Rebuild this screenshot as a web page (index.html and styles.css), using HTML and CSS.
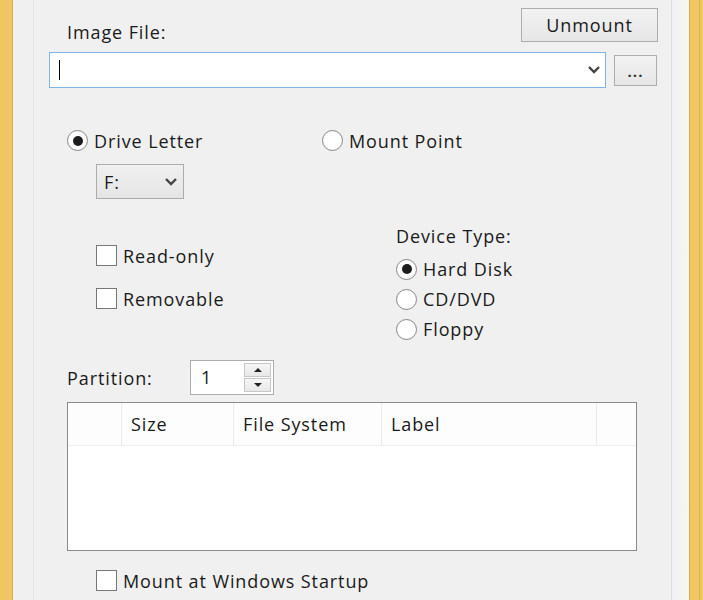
FILE: index.html
```html
<!DOCTYPE html>
<html>
<head>
<meta charset="utf-8">
<link rel="stylesheet" href="styles.css">
</head>
<body>
<div class="window">
  <div class="frame frame-left"></div>
  <div class="client">
    <div class="panel">
      <div class="row-top">
        <div class="label image-label">Image File:</div>
        <button class="btn unmount">Unmount</button>
      </div>
      <div class="row-file">
        <div class="combo">
          <span class="caret"></span>
          <svg class="chev" width="14" height="10" viewBox="0 0 14 10"><path d="M2 2 L7 7 L12 2" fill="none" stroke="#444" stroke-width="2.4"/></svg>
        </div>
        <button class="btn browse">...</button>
      </div>
      <div class="row-radios">
        <label class="opt opt-drive"><span class="radio checked"></span>Drive Letter</label>
        <label class="opt"><span class="radio"></span>Mount Point</label>
      </div>
      <div class="drive-select">
        <span>F:</span>
        <svg class="chev" width="14" height="10" viewBox="0 0 14 10"><path d="M2 2 L7 7 L12 2" fill="none" stroke="#444" stroke-width="2.4"/></svg>
      </div>
      <div class="row-options">
        <div class="checks">
          <label class="opt check-row"><span class="checkbox"></span>Read-only</label>
          <label class="opt check-row"><span class="checkbox"></span>Removable</label>
        </div>
        <div class="device">
          <div class="label device-label">Device Type:</div>
          <label class="opt dev-row"><span class="radio checked"></span>Hard Disk</label>
          <label class="opt dev-row"><span class="radio"></span>CD/DVD</label>
          <label class="opt dev-row"><span class="radio"></span>Floppy</label>
        </div>
      </div>
      <div class="row-partition">
        <div class="label part-label">Partition:</div>
        <div class="spin">
          <span class="spin-value">1</span>
          <div class="spin-btns">
            <div class="spin-btn"><svg width="10" height="6" viewBox="0 0 10 6"><path d="M1 5 L5 1 L9 5 Z" fill="#222"/></svg></div>
            <div class="spin-btn"><svg width="10" height="6" viewBox="0 0 10 6"><path d="M1 1 L5 5 L9 1 Z" fill="#222"/></svg></div>
          </div>
        </div>
      </div>
      <div class="list">
        <div class="list-head">
          <div class="col c0"></div>
          <div class="col c1">Size</div>
          <div class="col c2">File System</div>
          <div class="col c3">Label</div>
          <div class="col c4"></div>
        </div>
      </div>
      <label class="opt startup"><span class="checkbox"></span>Mount at Windows Startup</label>
    </div>
    <div class="gutter-right"></div>
  </div>
  <div class="frame frame-right"></div>
</div>
</body>
</html>
```
FILE: styles.css
```css
* { box-sizing: border-box; }
html, body { margin: 0; padding: 0; }
body {
  width: 703px;
  height: 600px;
  overflow: hidden;
  font-family: "Open Sans", "Noto Sans", sans-serif;
  font-size: 18px;
  letter-spacing: 0.9px;
  color: #1a1a1a;
  background: #f0f0f0;
}
.window {
  display: flex;
  height: 600px;
}
.frame {
  flex: none;
  background: #efc662;
}
.frame-left {
  width: 13px;
  border-right: 1px solid #d6ad4c;
  box-shadow: 1px 0 0 #fbf6e6;
}
.frame-right {
  width: 14px;
  border-left: 1px solid #d6ad4c;
  background: linear-gradient(to right, #efc662 0, #efc662 9px, #d9b251 9px, #d9b251 10px, #efc662 10px);
}
.client {
  flex: 1;
  display: flex;
  background: #f0f0f0;
  padding-left: 20px;
}
.panel {
  width: 639px;
  border-left: 1px solid #e2e2e2;
  border-right: 1px solid #dcdcdc;
  background: #f0f0f0;
  padding: 8px 13px 0 15px;
}
.gutter-right {
  flex: 1;
  background: linear-gradient(to right, #f0f0f0, #f6f6f2);
}
.label { line-height: 24px; white-space: nowrap; }
.opt {
  display: flex;
  align-items: center;
  line-height: 24px;
  white-space: nowrap;
}

/* buttons */
.btn {
  font: inherit;
  letter-spacing: inherit;
  color: #1a1a1a;
  background: linear-gradient(#f2f2f2, #e6e6e6);
  border: 1px solid #adadad;
  padding: 0;
  margin: 0;
}

.row-top {
  display: flex;
  justify-content: space-between;
  align-items: flex-start;
  height: 34px;
}
.image-label { margin: 12px 0 0 18px; }
.unmount { width: 137px; height: 34px; }

.row-file {
  display: flex;
  margin-top: 10px;
  height: 36px;
}
.combo {
  width: 557px;
  height: 36px;
  background: #fff;
  border: 1px solid #7eb4ea;
  display: flex;
  align-items: center;
  justify-content: space-between;
  padding: 0 4px 0 9px;
}
.caret {
  width: 1px;
  height: 20px;
  background: #000;
}
.browse {
  width: 43px;
  height: 31px;
  margin: 3px 0 0 8px;
  font-size: 15px;
  font-weight: 700;
  line-height: 20px;
  letter-spacing: 1px;
  color: #333;
}

/* radios */
.radio {
  flex: none;
  width: 21px;
  height: 21px;
  border: 1px solid #888;
  border-radius: 50%;
  background: radial-gradient(circle, #ffffff 55%, #f0f0f0);
  margin-right: 6px;
  position: relative;
}
.radio.checked::after {
  content: "";
  position: absolute;
  left: 4.5px;
  top: 4.5px;
  width: 10px;
  height: 10px;
  border-radius: 50%;
  background: #1c1c1c;
}
.checkbox {
  flex: none;
  width: 21px;
  height: 21px;
  border: 1px solid #777;
  background: #fff;
  margin-right: 6px;
}

.row-radios {
  display: flex;
  margin-top: 42px;
  padding-left: 18px;
  height: 21px;
}
.opt-drive { width: 255px; }

.drive-select {
  margin: 13px 0 0 47px;
  width: 88px;
  height: 35px;
  border: 1px solid #acacac;
  background: linear-gradient(#f0f0f0, #e5e5e5);
  display: flex;
  align-items: center;
  justify-content: space-between;
  padding: 0 5px 0 7px;
}

.row-options {
  display: flex;
  margin-top: 25px;
}
.checks {
  width: 347px;
  padding: 21px 0 0 47px;
}
.check-row { height: 21px; margin-bottom: 22px; }
.device-label { height: 24px; margin-bottom: 6px; }
.dev-row { height: 30px; }

.row-partition {
  display: flex;
  align-items: center;
  margin-top: 16px;
  padding-left: 18px;
}
.part-label { width: 123px; }
.spin {
  width: 84px;
  height: 35px;
  border: 1px solid #acacac;
  background: #fff;
  display: flex;
  justify-content: space-between;
  padding: 2px 2px 2px 10px;
}
.spin-value { line-height: 29px; }
.spin-btns {
  width: 27px;
  display: flex;
  flex-direction: column;
  gap: 1px;
}
.spin-btn {
  flex: 1;
  border: 1px solid #c7c7c7;
  background: linear-gradient(#f6f6f6, #e8e8e8);
  display: flex;
  align-items: center;
  justify-content: center;
}

.list {
  margin: 7px 0 0 18px;
  width: 570px;
  height: 149px;
  border: 1px solid #8a8a8a;
  background: #fff;
}
.list-head {
  display: flex;
  height: 43px;
  border-bottom: 1px solid #f0f0f0;
  background: #fdfdfd;
}
.col {
  height: 42px;
  line-height: 42px;
  padding-left: 9px;
  border-right: 1px solid #eaeaea;
  white-space: nowrap;
}
.c0 { width: 54px; }
.c1 { width: 112px; }
.c2 { width: 148px; }
.c3 { width: 215px; }
.c4 { flex: 1; border-right: none; }

.startup {
  margin: 19px 0 0 47px;
  height: 21px;
}
```
